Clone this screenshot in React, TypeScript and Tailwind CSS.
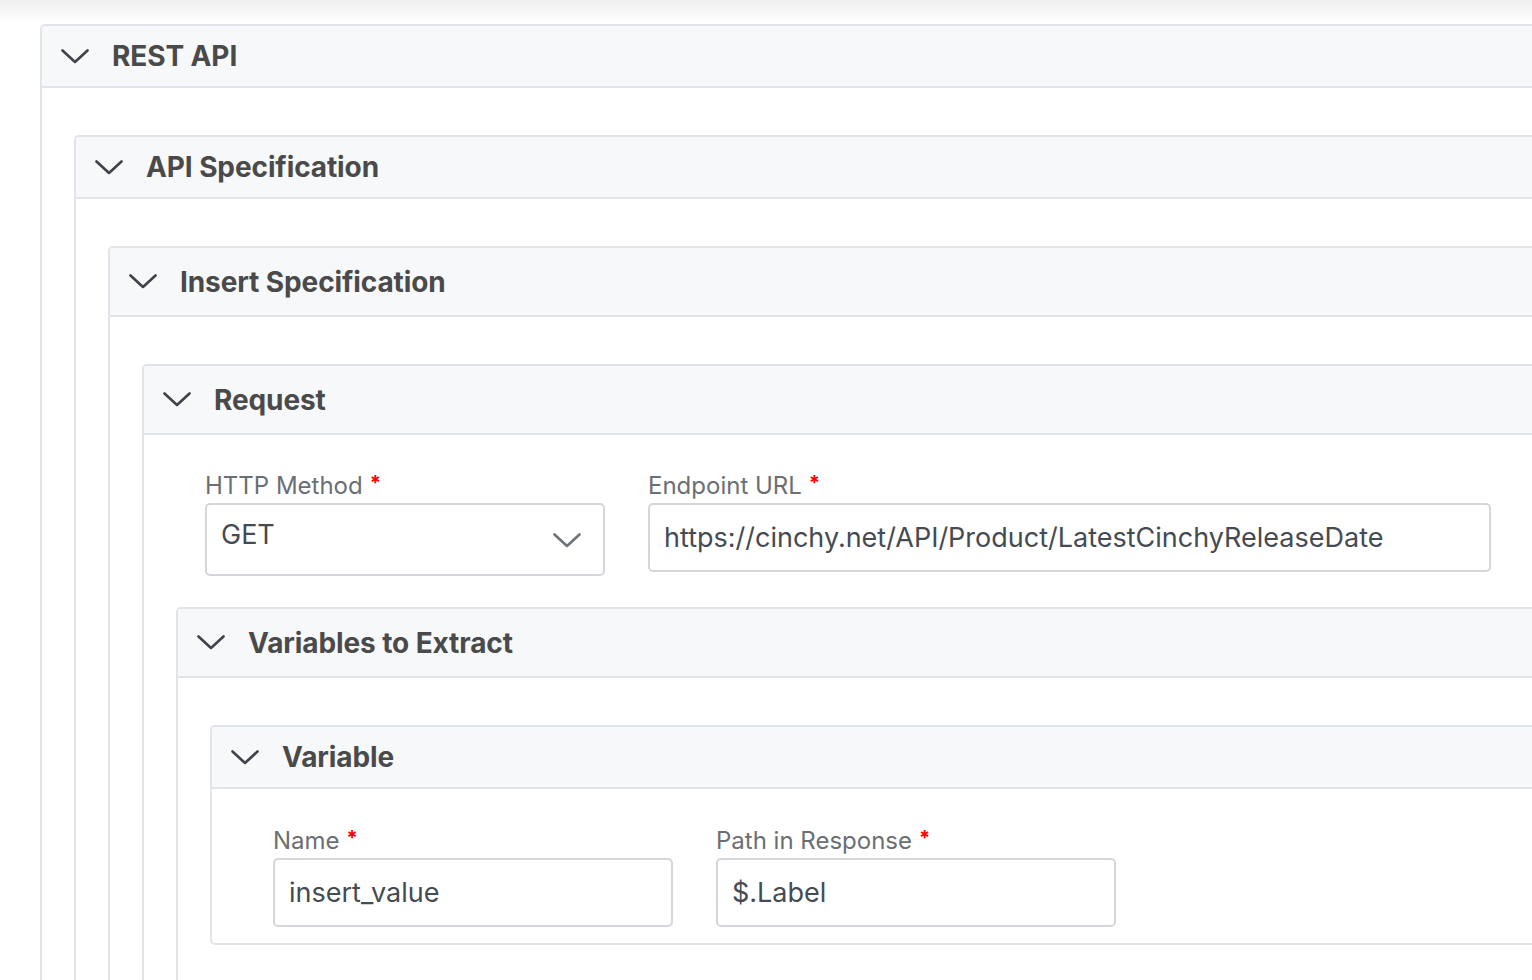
import React from "react";

const font = { fontFamily: "Inter, 'Noto Sans', sans-serif" };

function Chevron({ className }: { className?: string }) {
  return (
    <svg viewBox="0 0 28 15" className={className} fill="none">
      <path
        d="M1.5 1.5 L14 13 L26.5 1.5"
        stroke="currentColor"
        strokeWidth="2.6"
        strokeLinecap="round"
        strokeLinejoin="round"
      />
    </svg>
  );
}

function Panel({
  title,
  tall,
  children,
  className = "",
}: {
  title: string;
  tall?: boolean;
  children?: React.ReactNode;
  className?: string;
}) {
  return (
    <div className={`rounded-[5px] border-2 border-[#e1e4e8] bg-white ${className}`}>
      <div
        className={`flex items-center rounded-t-[4px] border-b-2 border-[#e1e4e8] bg-[#f7f8fa] pl-[19px] ${
          tall ? "h-[69px]" : "h-[62px]"
        }`}
      >
        <Chevron className="h-[15px] w-[28px] text-[#3d434a]" />
        <span className="ml-[23px] text-[28px] font-bold tracking-[-0.1px] text-[#4a4a4a]">
          {title}
        </span>
      </div>
      {children}
    </div>
  );
}

function Label({ text }: { text: string }) {
  return (
    <div className="flex h-[28px] items-center text-[24px] leading-[28px] text-[#6b6f74]">
      {text}
      <span className="ml-[7px] -mt-[6px] text-[20px] font-bold text-[#ff0000]">*</span>
    </div>
  );
}

function Field({
  label,
  value,
  select,
  wide,
}: {
  label: string;
  value: string;
  select?: boolean;
  wide?: boolean;
}) {
  return (
    <div className={wide ? "col-span-2" : ""}>
      <Label text={label} />
      <div
        className={`mt-[3px] flex items-center rounded-[5px] border-2 border-[#d3d7dc] bg-white pl-[14px] pr-[22px] text-[27px] text-[#454b52] ${
          select ? "h-[73px] justify-between pb-[8px]" : "h-[69px] pt-[2px]"
        }`}
      >
        <span>{value}</span>
        {select && <Chevron className="mt-[10px] h-[15px] w-[28px] text-[#6c737a]" />}
      </div>
    </div>
  );
}

export default function App() {
  return (
    <div className="h-[980px] w-[1532px] overflow-hidden bg-white" style={font}>
      <div className="h-[24px] bg-gradient-to-b from-[#efefef] to-white" />
      <div className="ml-[40px] w-[1900px]">
        <Panel title="REST API">
          <div className="px-[32px] pt-[47px]">
            <Panel title="API Specification">
              <div className="px-[32px] pt-[47px]">
                <Panel title="Insert Specification" tall>
                  <div className="px-[32px] pt-[47px]">
                    <Panel title="Request" tall>
                      <div className="px-[32px] pt-[37px]">
                        <div className="grid grid-cols-[400px_400px_400px] gap-x-[43px] pl-[29px]">
                          <Field label="HTTP Method" value="GET" select />
                          <Field
                            label="Endpoint URL"
                            value="https://cinchy.net/API/Product/LatestCinchyReleaseDate"
                            wide
                          />
                        </div>
                        <Panel title="Variables to Extract" tall className="mt-[31px]">
                          <div className="px-[32px] pt-[47px]">
                            <Panel title="Variable">
                              <div className="px-[32px] pb-[16px] pt-[38px]">
                                <div className="grid grid-cols-[400px_400px] gap-x-[43px] pl-[29px]">
                                  <Field label="Name" value="insert_value" />
                                  <Field label="Path in Response" value="$.Label" />
                                </div>
                              </div>
                            </Panel>
                            <div className="h-[200px]" />
                          </div>
                        </Panel>
                      </div>
                    </Panel>
                  </div>
                </Panel>
              </div>
            </Panel>
          </div>
        </Panel>
      </div>
    </div>
  );
}
